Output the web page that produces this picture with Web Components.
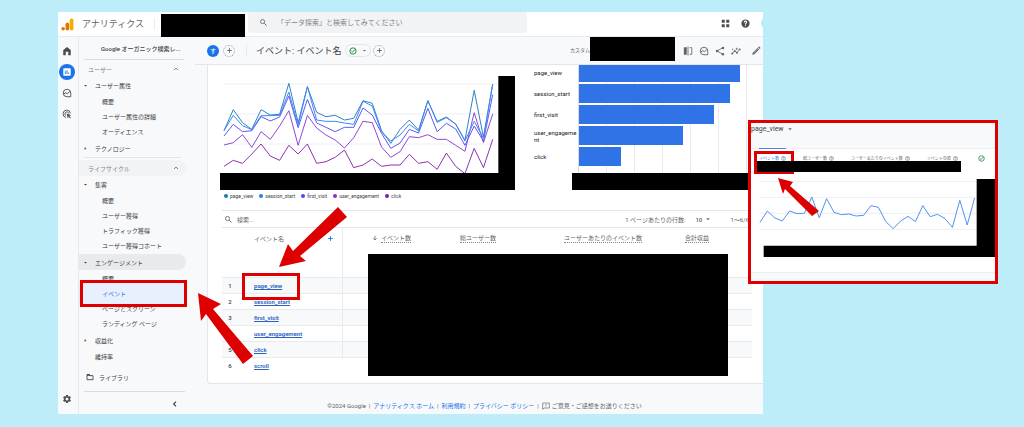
<!DOCTYPE html>
<html lang="ja">
<head>
<meta charset="utf-8">
<title>アナリティクス</title>
<style>
body { margin: 0; background: #bcedf8; font-family: Roboto, "Noto Sans CJK JP", sans-serif; font-size: 6px; line-height: 9px; color: #3c4043; }
</style>
</head>
<body>
<ga-page></ga-page>

<script>
const define = (name, html, setup) => {
  const template = document.createElement('template');
  template.innerHTML = html;
  customElements.define(name, class extends HTMLElement {
    constructor() {
      super();
      this.attachShadow({ mode: 'open' }).append(template.content.cloneNode(true));
    }
    connectedCallback() { if (setup) setup(this, this.shadowRoot); }
  });
};

const ICONS = {
  search: '<circle cx="9.5" cy="9.5" r="5.5" fill="none" stroke="currentColor" stroke-width="2.2"/><path d="M14 14l6 6" stroke="currentColor" stroke-width="2.6"/>',
  home: '<path d="M3 22V9.500L12 2.500l9 7V22h-6v-8H9v8z"/>',
  report: '<path d="M19 3H5c-1.100 0-2 .9-2 2v14c0 1.100.9 2 2 2h14c1.100 0 2-.9 2-2V5c0-1.100-.9-2-2-2zM9 17H7v-7h2v7zm4 0h-2V7h2v10zm4 0h-2v-4h2v4z"/>',
  explore: '<path d="M12 3a9 9 0 1 0 0 18h9v-9a9 9 0 0 0-9-9z" fill="none" stroke="currentColor" stroke-width="2.2"/><path d="M4 15l5-4 4 3 6-6" fill="none" stroke="currentColor" stroke-width="2.4"/>',
  target: '<path d="M10 20.500A9 9 0 1 1 20.500 10.500M9.500 16A4.800 4.800 0 1 1 16.500 11" fill="none" stroke="currentColor" stroke-width="2.200"/><path d="M11 11l11 4-4.500 2 4 4-1.800 1.800-4-4-1.700 4z"/>',
  gear: '<path d="M19.140 12.940c.04-.3.060-.61.060-.94s-.02-.64-.07-.94l2.030-1.580a.49.49 0 0 0 .12-.61l-1.920-3.320a.49.49 0 0 0-.59-.22l-2.390.96c-.5-.38-1.030-.7-1.620-.94l-.36-2.540A.48.48 0 0 0 13.920 2.400h-3.840a.48.48 0 0 0-.47.41l-.36 2.540c-.59.24-1.130.57-1.620.94l-2.390-.96a.48.48 0 0 0-.59.22L2.740 8.870a.48.48 0 0 0 .12.61l2.030 1.580a6 6 0 0 0 0 1.880l-2.030 1.580a.49.49 0 0 0-.12.61l1.920 3.320c.12.22.37.29.59.22l2.390-.96c.5.38 1.030.7 1.620.94l.36 2.540c.05.24.24.41.48.41h3.840c.24 0 .44-.17.47-.41l.36-2.540c.59-.24 1.130-.56 1.620-.94l2.390.96c.22.08.47 0 .59-.22l1.920-3.320a.48.48 0 0 0-.12-.61zM12 15.600a3.600 3.600 0 1 1 0-7.200 3.600 3.600 0 0 1 0 7.200z"/>',
  apps: '<path d="M2 2h8v8H2zM14 2h8v8h-8zM2 14h8v8H2zM14 14h8v8h-8z"/>',
  help: '<path d="M12 1a11 11 0 1 0 0 22 11 11 0 0 0 0-22zm1 18h-2.500v-2.500H13zm2.200-7.700c-1 1-2.200 1.500-2.200 3.700h-2.500c0-3 1.300-3.700 2.300-4.700 1.600-1.600.8-3.300-.8-3.300-1.200 0-2 .9-2 2H7.500a4.500 4.500 0 1 1 7.700 2.300z"/>',
  helpo: '<circle cx="12" cy="12" r="9.500" fill="none" stroke="currentColor" stroke-width="2.500"/><path d="M8.500 9.500a3.500 3.500 0 1 1 5.500 3c-1.500 1-2 1.300-2 3M12 16.500V19" fill="none" stroke="currentColor" stroke-width="2.400"/>',
  check: '<circle cx="12" cy="12" r="9.500" fill="none" stroke="currentColor" stroke-width="2.600"/><path d="M7 12l3.500 3.500L19 6.500" fill="none" stroke="currentColor" stroke-width="2.600"/>',
  plus: '<path d="M12 4v16M4 12h16" stroke="currentColor" stroke-width="3"/>',
  compare: '<path d="M2 3h7v18H2zM11 1h2v22h-2z"/><path d="M16 4h5v16h-5" fill="none" stroke="currentColor" stroke-width="2"/>',
  share: '<path d="M19 4L5 12l14 8" fill="none" stroke="currentColor" stroke-width="2"/><circle cx="19" cy="4.500" r="3"/><circle cx="5" cy="12" r="3"/><circle cx="19" cy="19.500" r="3"/>',
  insights: '<path d="M3 18l6-6 5 4 7-8" fill="none" stroke="currentColor" stroke-width="2"/><circle cx="3" cy="18" r="2.300"/><circle cx="9" cy="12" r="2.300"/><circle cx="14" cy="16" r="2.300"/><circle cx="21" cy="8" r="2.300"/><path d="M14 3l1 3 3 1-3 1-1 3-1-3-3-1 3-1zM4 5l.7 2 2 .7-2 .7L4 10.500l-.7-2-2-.7 2-.7z"/>',
  pencil: '<path d="M3 21l1-5L15.500 4.500l4 4L8 20zM16.800 3.200l1.400-1.400a1.500 1.500 0 0 1 2 0l2 2a1.500 1.500 0 0 1 0 2l-1.400 1.400z"/><path d="M6 17l9.500-9.500" stroke="#f8f9fa" stroke-width="1.200"/>',
  folder: '<path d="M3 5h7l2 3h9v12H3z" fill="none" stroke="currentColor" stroke-width="2.600"/><path d="M3 4h8l2 4H3z"/>',
  up: '<path d="M6 15l6-6 6 6" fill="none" stroke="currentColor" stroke-width="2.400"/>',
  left: '<path d="M15 5l-7 7 7 7" fill="none" stroke="currentColor" stroke-width="3.400"/>',
  down: '<path d="M5 9h14l-7 8z"/>',
  right: '<path d="M8 5v14l8-7z"/>',
  sort: '<path d="M12 3v17M5 13l7 7 7-7" fill="none" stroke="currentColor" stroke-width="3"/>',
  feedback: '<path d="M2 3h20v15H6l-4 4z" fill="none" stroke="currentColor" stroke-width="2"/><path d="M11 6h2v6h-2zM11 14h2v2h-2z"/>',
  logo: '<rect x="16" y="1" width="7" height="22" rx="3.500" fill="#f9ab00"/><rect x="8.500" y="8.500" width="6.500" height="14.500" rx="3.200" fill="#e37400"/><circle cx="4" cy="19.800" r="3.300" fill="#e37400"/>'
};
define('ga-icon', `<style>
:host { display: block; flex: none; width: var(--size, 10px); height: var(--size, 10px); }
svg { display: block; width: 100%; height: 100%; fill: currentColor; }
</style><svg viewBox="0 0 24 24" aria-hidden="true"></svg>`, (el, root) => {
  root.querySelector('svg').innerHTML = ICONS[el.getAttribute('name')];
});

define('ga-redact', `<style>:host { display: block; background: #000; }</style>`);

/* Red pointer; the element's box is the bounding box of its outline. */
define('ga-arrow', `<style>
:host { display: block; position: absolute; pointer-events: none; z-index: 3; }
svg { display: block; width: 100%; height: 100%; fill: #de0000; }
</style><svg aria-hidden="true"><polygon/></svg>`, (el, root) => {
  root.querySelector('svg').setAttribute('viewBox', el.getAttribute('box'));
  root.querySelector('polygon').setAttribute('points', el.getAttribute('points'));
});

define('ga-header', `<style>
:host { display: flex; align-items: center; height: 24px; border-bottom: 1px solid #e8eaed; background: #fff; color: #5f6368; }
.logo { --size: 13px; margin: 0 8px 0 3px; }
h1 { margin: 0; font-size: 9px; line-height: 12px; font-weight: 400; white-space: nowrap; }
.brand { padding-right: 10px; border-right: 1px solid #e8eaed; }
ga-redact { flex: none; width: 84px; height: 23px; margin: 2px 3px 0 6px; z-index: 1; }
.search { flex: 0 1 279px; box-sizing: border-box; display: flex; align-items: center; gap: 9px; height: 21px; margin-bottom: 3px; padding-left: 11px; border-radius: 3px; background: #f1f3f4; --size: 9px; }
input { flex: 1; min-width: 0; padding: 0; border: 0; outline: 0; background: none; font: 7px/12px Roboto, "Noto Sans CJK JP", sans-serif; }
input::placeholder { color: #80868b; opacity: 1; }
.tools { display: flex; align-items: center; margin-left: auto; gap: 11px; padding-bottom: 2px; }
button { display: block; padding: 0; border: 0; background: none; color: #4a4e52; --size: 9px; }
.avatar { width: 12px; height: 12px; margin-right: -10px; border-radius: 50%; background: #a5f3ee; }
</style>
<ga-icon class="logo" name="logo"></ga-icon><h1 class="brand">アナリティクス</h1>
<ga-redact></ga-redact>
<label class="search"><ga-icon name="search"></ga-icon><input type="search" placeholder="「データ探索」と検索してみてください" aria-label="検索"></label>
<div class="tools"><button aria-label="アプリ"><ga-icon name="apps"></ga-icon></button><button aria-label="ヘルプ"><ga-icon name="help"></ga-icon></button><button class="avatar" aria-label="アカウント"></button></div>`);

define('ga-rail', `<style>
:host { display: flex; flex-direction: column; align-items: center; gap: 5px; box-sizing: border-box; width: 21px; padding: 6px 4px 7px 1px; border-right: 1px solid #e8eaed; }
button { flex: none; display: grid; place-items: center; width: 16px; height: 16px; padding: 0; border: 0; border-radius: 50%; background: none; color: #4a4e52; }
.on { background: #1a73e8; color: #fff; }
.end { margin-top: auto; }
</style>
<button aria-label="ホーム"><ga-icon name="home"></ga-icon></button>
<button class="on" aria-label="レポート"><ga-icon name="report"></ga-icon></button>
<button aria-label="探索"><ga-icon name="explore"></ga-icon></button>
<button aria-label="広告"><ga-icon name="target"></ga-icon></button>
<button class="end" aria-label="管理"><ga-icon name="gear"></ga-icon></button>`);

/* One navigation row. level: head | child, or none for a section row */
define('ga-nav-item', `<style>
:host { display: block; position: relative; }
a { display: flex; align-items: center; height: 16px; padding: 0 6px 0 16px; margin-right: 9px; border-radius: 0 8px 8px 0; color: #3c4043; text-decoration: none; white-space: nowrap; position: relative; }
a ga-icon { --size: 5px; position: absolute; left: 4px; }
:host([level=child]) a { height: 15px; padding-left: 23px; }
:host([level=head]) a { padding-left: 9px; color: #80868b; }
:host([level=head]) a ga-icon { --size: 8px; position: static; margin-left: auto; color: #5f6368; }
:host([tone=light]) a { background: #f1f3f4; }
:host([tone=dark]) a { background: #e8eaed; }
:host([current]) a { background: #e8f0fe; color: #1a73e8; border-radius: 0; height: 15px; box-shadow: 0 0 0 4px #e8f0fe; margin-left: 4px; margin-right: 12px; padding-left: 19px; }
:host([current]) { z-index: 2; }
.frame { display: none; }
:host([current]) .frame { display: block; position: absolute; inset: -6px 8px -6px 1px; border: 3px solid #de0000; }
</style><a href="#"><slot></slot></a><span class="frame"></span>`, (el, root) => {
  const name = el.getAttribute('icon');
  if (!name) return;
  const icon = document.createElement('ga-icon');
  icon.setAttribute('name', name);
  root.querySelector('a').append(icon);
});

define('ga-nav', `<style>
:host { display: flex; flex-direction: column; width: 116px; }
.property { height: 22px; line-height: 23px; margin: 0 11px 1px 5px; padding-left: 17px; border-bottom: 1px solid #dadce0; white-space: nowrap; font-weight: 500; }
.sub { padding: 1px 0; }
hr { width: 97px; height: 1px; margin: 1px 0 2px 5px; border: 0; background: #e3e5e8; }
.library { display: flex; align-items: center; gap: 5px; margin: 5px 10px 6px 5px; padding-left: 2px; height: 16px; color: #3c4043; text-decoration: none; --size: 8px; }
.foot { display: flex; justify-content: flex-end; margin: 0 10px 0 5px; padding: 8px 6px 6px; border-top: 1px solid #dadce0; }
button { display: block; padding: 0; border: 0; background: none; --size: 8px; color: #3c4043; }
</style>
<div class="property">Google オーガニック検索レ...</div>
<ga-nav-item level="head" icon="up">ユーザー</ga-nav-item>
<ga-nav-item icon="down">ユーザー属性</ga-nav-item>
<div class="sub"><ga-nav-item level="child">概要</ga-nav-item><ga-nav-item level="child">ユーザー属性の詳細</ga-nav-item><ga-nav-item level="child">オーディエンス</ga-nav-item></div>
<ga-nav-item icon="right">テクノロジー</ga-nav-item>
<hr>
<ga-nav-item level="head" icon="up" tone="light">ライフサイクル</ga-nav-item>
<ga-nav-item icon="down">集客</ga-nav-item>
<div class="sub"><ga-nav-item level="child">概要</ga-nav-item><ga-nav-item level="child">ユーザー獲得</ga-nav-item><ga-nav-item level="child">トラフィック獲得</ga-nav-item><ga-nav-item level="child">ユーザー獲得コホート</ga-nav-item></div>
<ga-nav-item icon="down" tone="dark">エンゲージメント</ga-nav-item>
<div class="sub"><ga-nav-item level="child">概要</ga-nav-item><ga-nav-item level="child" current>イベント</ga-nav-item><ga-nav-item level="child">ページとスクリーン</ga-nav-item><ga-nav-item level="child">ランディング ページ</ga-nav-item></div>
<ga-nav-item icon="right">収益化</ga-nav-item>
<ga-nav-item>維持率</ga-nav-item>
<a class="library" href="#"><ga-icon name="folder"></ga-icon>ライブラリ</a>
<div class="foot"><button aria-label="折りたたむ"><ga-icon name="left"></ga-icon></button></div>`);

define('ga-toolbar', `<style>
:host { display: flex; align-items: center; height: 27px; padding-left: 12px; border-bottom: 1px solid #e3e5e8; white-space: nowrap; }
button { display: grid; place-items: center; flex: none; padding: 0; border: 0; background: none; color: #5f6368; font: 6px/9px Roboto, "Noto Sans CJK JP", sans-serif; }
.who { width: 12px; height: 12px; border-radius: 50%; background: #1a73e8; color: #fff; margin-right: 4px; }
.add { box-sizing: border-box; width: 12px; height: 12px; border: 1px dotted #9aa0a6; border-radius: 50%; --size: 7px; }
h2 { margin: 0 4px 0 11px; padding-left: 9px; border-left: 1px solid #e8eaed; font-size: 9px; line-height: 12px; font-weight: 400; }
.state { display: flex; align-items: center; gap: 5px; box-sizing: border-box; height: 13px; width: 26px; padding: 0 3px; margin-right: 2px; border: 1px solid #e3e5e8; border-radius: 7px; color: #188038; --size: 8px; }
.state .tri { --size: 5px; color: #5f6368; }
.range { margin-left: auto; font-size: 5px; color: #5f6368; }
ga-redact { flex: none; width: 85px; height: 24px; margin: 0 8px 4px 0; }
.tools { display: flex; gap: 6px; padding-right: 2px; }
.tools button:last-child { margin-left: 4px; }
</style>
<button class="who">す</button><button class="add" aria-label="比較を追加"><ga-icon name="plus"></ga-icon></button>
<h2>イベント: イベント名</h2>
<button class="state" aria-label="データの状態"><ga-icon name="check"></ga-icon><ga-icon class="tri" name="down"></ga-icon></button>
<button class="add" aria-label="フィルタを追加"><ga-icon name="plus"></ga-icon></button>
<span class="range">カスタム</span><ga-redact></ga-redact>
<div class="tools"><button aria-label="比較"><ga-icon name="compare"></ga-icon></button><button aria-label="探索"><ga-icon name="explore"></ga-icon></button><button aria-label="共有"><ga-icon name="share"></ga-icon></button><button aria-label="インサイト"><ga-icon name="insights"></ga-icon></button><button aria-label="編集"><ga-icon name="pencil"></ga-icon></button></div>`);

const polyline = (values, start, step, colour) =>
  `<polyline fill="none" stroke="${colour}" stroke-width="3" stroke-linejoin="round" points="${values.map((v, i) => (start + step * i).toFixed(1) + ',' + v).join(' ')}"/>`;

const SERIES = [
  ['click', '#8a35ad', [319,301,310,282,252,288,301,256,282,252,310,305,292,270,323,315,297,319,315,315,283,310,305,328,279,319,341,265,323,238]],
  ['user_engagement', '#9048d8', [255,248,224,262,215,238,198,152,256,166,204,225,240,264,233,184,188,261,292,275,230,233,224,238,238,256,274,158,248,162]],
  ['first_visit', '#5f57f2', [228,193,215,212,170,183,171,108,203,118,189,202,215,202,202,144,165,220,265,249,208,219,145,215,190,207,256,198,243,104]],
  ['page_view', '#2f84c0', [212,149,188,208,149,165,163,70,188,80,157,170,166,180,175,122,130,212,250,208,180,210,122,184,171,192,241,91,232,72]],
  ['session_start', '#3d88f5', [212,166,197,209,167,167,166,96,196,80,180,184,184,189,193,124,138,216,243,225,193,213,122,187,173,192,243,184,234,72]]
];
define('ga-trend', `<style>
:host { display: block; padding-top: 11px; }
svg { display: block; width: 100%; }
ul { display: flex; gap: 6px; margin: 0; padding: 0 0 0 4px; list-style: none; font-size: 5px; line-height: 12px; }
li { display: flex; align-items: center; gap: 2px; }
i { width: 4px; height: 4px; border-radius: 50%; background: var(--dot); }
</style><svg viewBox="45 48 885 342" role="img" aria-label="イベント数の推移"></svg>
<ul><li><i style="--dot:#1976b8"></i>page_view</li><li><i style="--dot:#2b7bf3"></i>session_start</li><li><i style="--dot:#4f46f0"></i>first_visit</li><li><i style="--dot:#8430ce"></i>user_engagement</li><li><i style="--dot:#7b1fa2"></i>click</li></ul>`, (el, root) => {
  root.querySelector('svg').innerHTML =
    '<path d="M57 72H880M57 162H880M57 252H880" stroke="#eceef0" stroke-width="3"/>' +
    SERIES.map(([, colour, values]) => polyline(values, 57, 27.8, colour)).join('') +
    '<path d="M880 48h50v342H45v-51h835z"/>';
});

define('ga-bars', `<style>
:host { display: block; margin-top: -2px; }
.plot { display: grid; grid-template-columns: 44px minmax(0, 1fr); padding-bottom: 7px; row-gap: 2px; position: relative; }
.grid { grid-area: 1 / 2 / span 5 / auto; margin-bottom: -7px; border-left: 1px solid #dadce0; background: repeating-linear-gradient(90deg, transparent 0 27px, #e8eaed 27px 28px); }
.label { grid-column: 1; height: 19px; display: flex; align-items: center; line-height: 7px; color: #202124; }
.track { grid-column: 2; height: 19px; margin-left: 1px; }
.bar { height: 100%; width: calc(var(--share) * 1%); background: #2f73e6; }
ga-redact { height: 17px; margin-left: 38px; }
</style>
<div class="plot"><div class="grid"></div></div><ga-redact></ga-redact>`, (el, root) => {
  const plot = root.querySelector('.plot');
  [['page_view', 93], ['session_start', 87], ['first_visit', 78], ['user_engageme<br>nt', 60], ['click', 24]].forEach(([label, share], i) => {
    plot.insertAdjacentHTML('beforeend', `<div class="label" style="grid-row:${i + 1}"><span>${label}</span></div><div class="track" style="grid-row:${i + 1}"><div class="bar" style="--share:${share}"></div></div>`);
  });
});

define('ga-table', `<style>
:host { display: block; border-top: 1px solid #e3e5e8; }
.find { display: flex; align-items: center; height: 16px; border-bottom: 1px solid #e3e5e8; padding: 0 3px 0 2px; color: #5f6368; white-space: nowrap; }
.find > ga-icon { --size: 9px; margin-right: 4px; }
input, select { padding: 0; border: 0; outline: 0; background: none; font: 6px/9px Roboto, "Noto Sans CJK JP", sans-serif; color: #5f6368; appearance: none; }
input { width: 100px; }
input::placeholder { color: #5f6368; opacity: 1; }
.pages { display: flex; align-items: center; margin-left: auto; }
select { width: 10px; height: 9px; margin-left: 10px; font-weight: 500; }
.pages ga-icon { --size: 6px; margin: 0 19px 0 0; }
.wrap { position: relative; }
table { width: 100%; table-layout: fixed; border-spacing: 0; }
th, td { padding: 0; text-align: right; font-weight: 400; }
th { height: 49px; vertical-align: top; color: #5f6368; border-bottom: 1px solid #e8eaed; }
.name, .metric { display: flex; align-items: center; justify-content: flex-end; gap: 3px; margin-top: 5px; line-height: 9px; --size: 6px; }
.name { justify-content: space-between; padding: 1px 8px 0 0; }
u { text-decoration: none; border-bottom: 1px dotted #80868b; white-space: nowrap; }
td { height: 15px; line-height: 15px; border-bottom: 1px solid #e8eaed; }
tr:last-child td { border-color: transparent; }
tr:nth-child(odd) td { background: #f8f9fa; }
th:nth-child(2), td:nth-child(2) { text-align: left; padding-left: 16px; border-right: 1px solid #e8eaed; }
td:first-child { text-align: center; font-weight: 500; }
td a { color: #2962c4; font-weight: 600; text-decoration: underline; text-underline-offset: 1px; }
button { display: block; padding: 0; border: 0; background: none; color: #1a73e8; --size: 7px; }
.cover { position: absolute; inset: 26px 24px -2px 146px; }
.frame { position: absolute; left: 20px; top: 45px; width: 52px; height: 21px; border: 3px solid #de0000; }
ga-arrow { left: 57px; top: -21px; width: 68px; height: 60px; }
</style>
<div class="find"><ga-icon name="search"></ga-icon><input type="search" placeholder="検索..." aria-label="表を検索"><div class="pages"><label for="rows">1 ページあたりの行数:</label><select id="rows"><option>10</option></select><ga-icon name="down"></ga-icon><span>1～6/6</span></div></div>
<div class="wrap"><table>
<colgroup><col style="width:16px"><col style="width:105px"><col style="width:68px"><col style="width:85px"><col style="width:146px"><col style="width:67px"><col></colgroup>
<thead><tr><th></th><th><div class="name">イベント名<button aria-label="列を追加"><ga-icon name="plus"></ga-icon></button></div></th><th><div class="metric"><ga-icon name="sort"></ga-icon><u>イベント数</u></div></th><th><div class="metric"><u>総ユーザー数</u></div></th><th><div class="metric"><u>ユーザーあたりのイベント数</u></div></th><th><div class="metric"><u>合計収益</u></div></th><th></th></tr></thead>
<tbody></tbody></table>
<ga-redact class="cover"></ga-redact><div class="frame"></div>
<ga-arrow box="0 0 68 60" points="0,60 9,37 14,44 59,0 68,10 21,49 27,54"></ga-arrow></div>`, (el, root) => {
  root.querySelector('tbody').innerHTML = ['page_view', 'session_start', 'first_visit', 'user_engagement', 'click', 'scroll']
    .map((name, i) => `<tr><td>${i + 1}</td><td><a href="#">${name}</a></td><td></td><td></td><td></td><td></td><td></td></tr>`).join('');
});

define('ga-footer', `<style>
:host { display: flex; justify-content: center; align-items: center; gap: 3px; height: 15px; margin-top: 14px; padding-left: 11px; white-space: nowrap; color: #5f6368; }
a { color: #1a73e8; text-decoration: none; }
a.talk { display: flex; align-items: center; gap: 2px; color: #5f6368; --size: 8px; }
</style>
<span>©2024 Google</span>|<a href="#">アナリティクス ホーム</a>|<a href="#">利用規約</a>|<a href="#">プライバシー ポリシー</a>|<a class="talk" href="#"><ga-icon name="feedback"></ga-icon>ご意見・ご感想をお送りください</a>`);

define('ga-app', `<style>
:host { display: block; overflow: hidden; background: #f8f9fb; }
.body { display: grid; grid-template-columns: auto auto minmax(0, 1fr); }
.card { margin-left: 12px; background: #fff; border-left: 1px solid #e3e5e8; border-bottom: 1px solid #e3e5e8; border-radius: 0 0 0 4px; overflow: hidden; padding: 0 11px 9px 12px; }
.charts { display: grid; grid-template-columns: minmax(0, 295fr) minmax(0, 218fr); gap: 19px; padding-bottom: 8px; }
ga-table { margin-left: 2px; }
</style>
<ga-header></ga-header>
<div class="body"><ga-rail></ga-rail><ga-nav></ga-nav>
<main><ga-toolbar></ga-toolbar><div class="card"><div class="charts"><ga-trend></ga-trend><ga-bars></ga-bars></div><ga-table></ga-table></div><ga-footer></ga-footer></main></div>`);

define('ga-inset', `<style>
:host { display: block; box-sizing: border-box; border: 3px solid #de0000; background: #f8f9fb; padding-bottom: 8px; }
select { appearance: none; padding: 0; border: 0; background: none; font: 7px/12px Roboto, sans-serif; color: #3c4043; width: 36px; height: 12px; }
.pick { display: flex; align-items: center; height: 12px; margin-bottom: 13px; --size: 6px; color: #5f6368; }
.card { position: relative; background: #fff; padding-bottom: 14px; border-bottom: 1px solid #eceef0; }
.metrics { display: flex; align-items: center; padding: 0 10px 0 8px; height: 19px; font-size: 4px; line-height: 6px; color: #5f6368; white-space: nowrap; border-top: 1px solid #eceef0; }
.metric { display: flex; align-items: center; gap: 2px; margin-right: 17px; --size: 5px; }
.on { color: #1a73e8; position: relative; }
.on::before { content: ""; position: absolute; left: 0; right: 0; top: -8px; height: 1px; background: #4285f4; }
.on ga-icon { color: #5f6368; }
.ok { --size: 7px; margin-left: auto; color: #188038; }
.values { height: 11px; margin: -7px 34px 5px 6px; position: relative; z-index: 1; }
svg { display: block; width: 100%; }
.frame { position: absolute; left: 3px; top: 3px; width: 34px; height: 17px; border: 3px solid #de0000; z-index: 0; }
ga-arrow { left: 27px; top: 30px; width: 41px; height: 38px; }
</style>
<div class="pick"><select aria-label="イベント"><option>page_view</option></select><ga-icon name="down"></ga-icon></div>
<div class="card"><div class="metrics"><span class="metric on">イベント数<ga-icon name="helpo"></ga-icon></span><span class="metric">総ユーザー数<ga-icon name="helpo"></ga-icon></span><span class="metric">ユーザーあたりのイベント数<ga-icon name="helpo"></ga-icon></span><span class="metric">イベントの値<ga-icon name="helpo"></ga-icon></span><ga-icon class="ok" name="check"></ga-icon></div>
<ga-redact class="values"></ga-redact>
<svg viewBox="34 216 732 243" role="img" aria-label="page_view の推移"></svg>
<div class="frame"></div>
<ga-arrow box="0 0 41 38" points="0,0 15,4 12,8 41,33 34,38 7,11 5,16"></ga-arrow></div>`, (el, root) => {
  root.querySelector('svg').innerHTML =
    '<path d="M58 229H710M58 277H710M58 325H710M58 373H710" stroke="#eceef0" stroke-width="3"/>' +
    polyline([352,318,339,348,318,326,325,276,338,281,322,329,327,333,331,302,307,350,371,348,334,350,302,335,328,341,367,286,360,279], 61, 22.2, '#5390f5') +
    '<path d="M711 222h55v234H72v-34h639z"/>';
});

define('ga-page', `<style>
:host { display: block; position: relative; padding: 12px 261px 13px 58px; }
ga-inset { position: absolute; top: 120px; right: 26px; width: 250px; z-index: 4; }
ga-arrow { left: 198px; top: 293px; width: 55px; height: 71px; }
</style>
<ga-app></ga-app><ga-inset></ga-inset>
<ga-arrow box="0 0 55 71" points="0,0 23,11 15,16 55,63 45,71 8,21 3,28"></ga-arrow>`);
</script>
</body>
</html>
